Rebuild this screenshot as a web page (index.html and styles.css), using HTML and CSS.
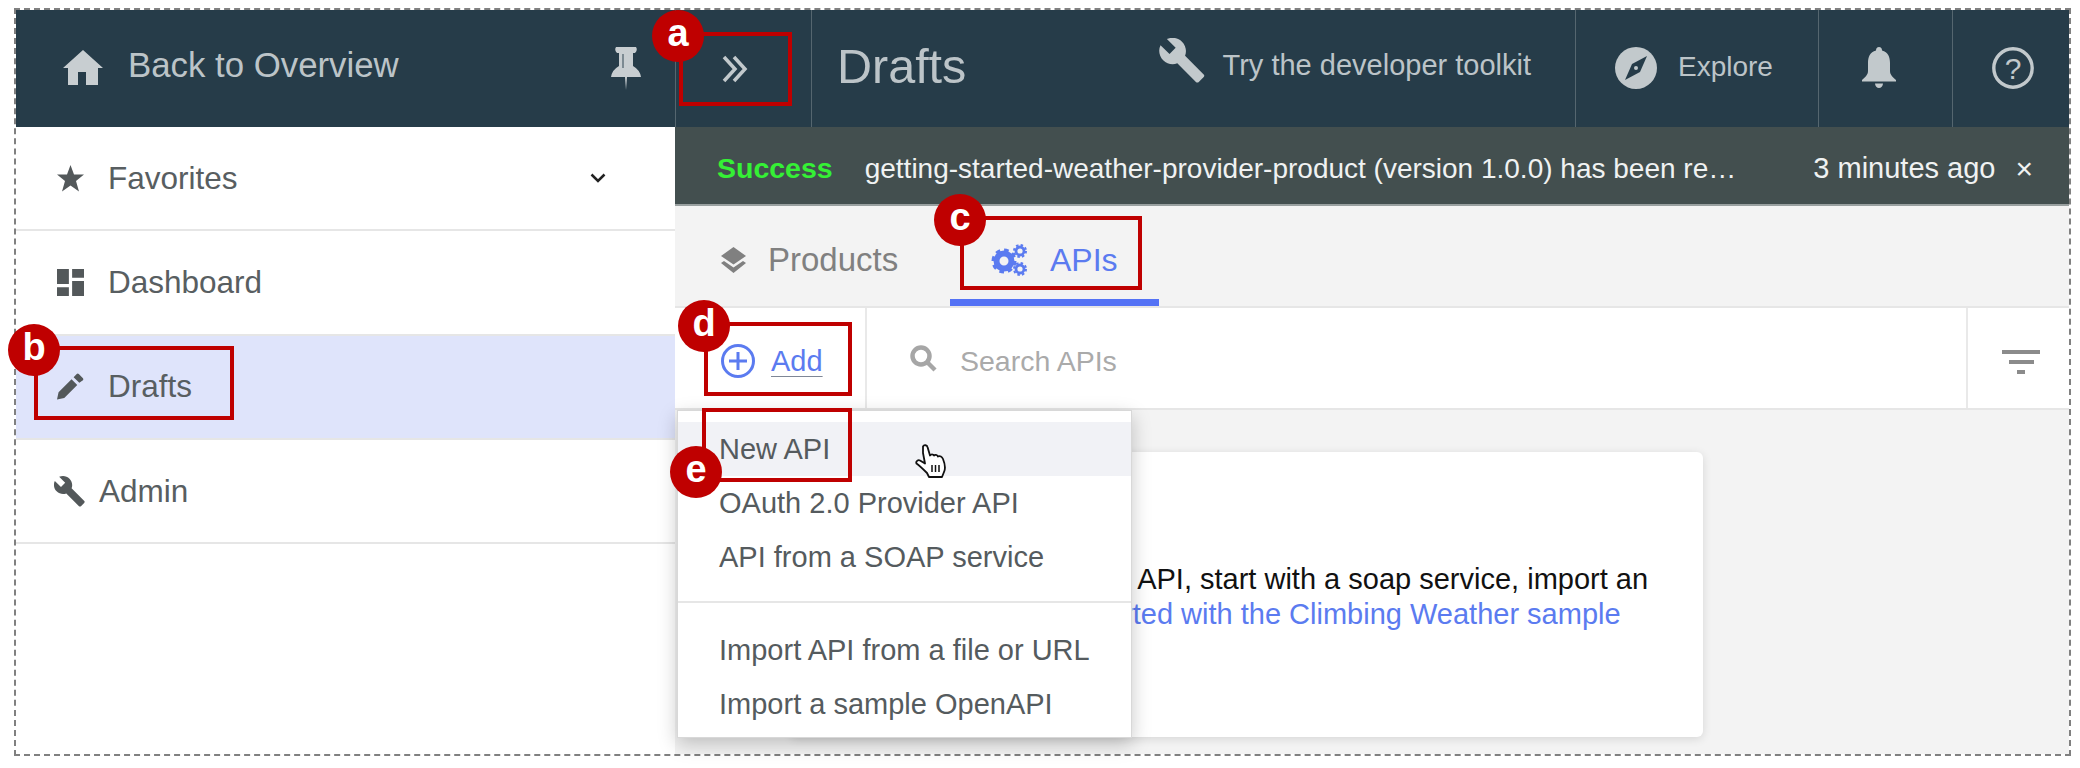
FILE: index.html
```html
<!doctype html>
<html lang="en">
<head>
    <meta charset="UTF-8">
    <title>Drafts</title>
    <link rel="stylesheet" href="styles.css">
</head>
<body>
<div class="frame">
    <aside class="sidebar">
        <div class="side-head">
            <svg class="home-icon" viewBox="0 0 40 35"><path d="M20 0L40 18H35V35H23V22H15V35H5V18H0Z"/></svg>
            <span class="side-head-text">Back to Overview</span>
            <svg class="pin-icon" viewBox="0 0 30 43"><path d="M5 0H25Q27 3 24 6H22V19Q29 23 30 30H16L15 43L14 30H0Q1 23 8 19V6H6Q3 3 5 0Z"/><path class="pin-slot" d="M11 7H13V21H11Z"/></svg>
        </div>
        <ul class="nav">
            <li class="nav-row">
                <svg class="nav-icon" viewBox="0 0 27 27"><path d="M13.5 0L17 9.6H27L19 16L22 26.5L13.5 20.5L5 26.5L8 16L0 9.6H10Z"/></svg>
                <span>Favorites</span>
                <svg class="nav-caret" viewBox="0 0 16 10"><path d="M1.5 1.5L8 8L14.5 1.5"/></svg>
            </li>
            <li class="nav-row">
                <svg class="nav-icon" viewBox="0 0 25 25"><path d="M0 0H11V14H0ZM0 17H11V25H0ZM14 0H25V8H14ZM14 11H25V25H14Z"/></svg>
                <span>Dashboard</span>
            </li>
            <li class="nav-row nav-row-active">
                <svg class="nav-icon" viewBox="0 0 26 25"><path d="M0 25L1.5 18L14 5.5L19.5 11L7 23.5ZM16 3.5L19 .5Q20 -.3 21 .5L25 4.5Q25.8 5.5 25 6.5L21.5 9Z"/></svg>
                <span>Drafts</span>
            </li>
            <li class="nav-row nav-row-admin">
                <svg class="nav-icon" viewBox="1 1.2 22.2 22"><path d="M22.7 19l-9.1-9.1c.9-2.3.4-5-1.5-6.9-2-2-5-2.4-7.4-1.3L9 6 6 9 1.6 4.7C.4 7.1.9 10.1 2.9 12.1c1.9 1.9 4.6 2.4 6.9 1.5l9.1 9.1c.4.4 1 .4 1.4 0l2.3-2.3c.5-.4.5-1.1.1-1.4z"/></svg>
                <span>Admin</span>
            </li>
        </ul>
    </aside>

    <main class="main">
        <div class="topbar">
            <div class="expand-cell">
                <svg class="expand-icon" viewBox="0 0 26 28"><path d="M2 2L13 14L2 26M12 2L23 14L12 26"/></svg>
            </div>
            <div class="page-title">Drafts</div>
            <div class="top-link">
                <svg class="wrench-icon" viewBox="1 1.2 22.2 22"><path d="M22.7 19l-9.1-9.1c.9-2.3.4-5-1.5-6.9-2-2-5-2.4-7.4-1.3L9 6 6 9 1.6 4.7C.4 7.1.9 10.1 2.9 12.1c1.9 1.9 4.6 2.4 6.9 1.5l9.1 9.1c.4.4 1 .4 1.4 0l2.3-2.3c.5-.4.5-1.1.1-1.4z"/></svg>
                <span>Try the developer toolkit</span>
            </div>
            <div class="top-cell explore-cell">
                <svg class="compass-icon" viewBox="0 0 42 42"><circle class="compass-disc" cx="21" cy="21" r="21"/><path class="compass-needle" d="M32 9L25 25L10 33L17 17Z"/><circle class="compass-disc" cx="21" cy="21" r="2"/></svg>
                <span>Explore</span>
            </div>
            <div class="top-cell bell-cell">
                <svg class="bell-icon" viewBox="0 0 34 41"><path d="M17 0C15 0 14 1.5 14 3.5C8 5 6 10 6 16V24C6 28 3 30 0 33V34.500H34V33C31 30 28 28 28 24V16C28 10 26 5 20 3.500C20 1.500 19 0 17 0ZM13 36.500H21C21 39 19 41 17 41S13 39 13 36.500Z"/></svg>
            </div>
            <div class="top-cell help-cell">
                <svg class="help-icon" viewBox="0 0 42 42"><circle cx="21" cy="21" r="19.200"/><text x="21" y="31.500" text-anchor="middle">?</text></svg>
            </div>
        </div>

        <div class="notice">
            <strong class="notice-label">Success</strong>
            <span class="notice-text">getting-started-weather-provider-product (version 1.0.0) has been re…</span>
            <span class="notice-time">3 minutes ago</span>
            <span class="notice-close">×</span>
        </div>

        <div class="tabs">
            <div class="tab">
                <svg class="layers-icon" viewBox="0 0 25 26"><path d="M12.500 0L25 9L12.500 17.500L0 9ZM0 16L3 14L12.500 20.500L22 14L25 16L12.500 26Z"/></svg>
                <span>Products</span>
            </div>
            <div class="tab tab-active">
                <svg class="gears-icon" viewBox="0 0 36 32">
                    <circle class="gear-body" cx="13" cy="17" r="7.500"/>
                    <circle class="gear-teeth" cx="13" cy="17" r="11"/>
                    <circle class="gear-small" cx="29" cy="7" r="4"/>
                    <circle class="gear-small-teeth" cx="29" cy="7" r="6"/>
                    <circle class="gear-small" cx="29" cy="25" r="4"/>
                    <circle class="gear-small-teeth" cx="29" cy="25" r="6"/>
                </svg>
                <span>APIs</span>
            </div>
        </div>

        <div class="toolbar">
            <div class="add-cell">
                <svg class="add-icon" viewBox="0 0 34 34"><circle cx="17" cy="17" r="15.500"/><path d="M17 8V26M8 17H26"/></svg>
                <a class="add-link">Add</a>
            </div>
            <div class="search-cell">
                <svg class="search-icon" viewBox="0 0 27 27"><circle cx="11" cy="11" r="8.500"/><path d="M17 17L25 25"/></svg>
                <span>Search APIs</span>
            </div>
            <div class="filter-cell">
                <div class="filter-icon">
                    <i class="filter-bar filter-bar-long"></i>
                    <i class="filter-bar filter-bar-mid"></i>
                    <i class="filter-bar filter-bar-short"></i>
                </div>
            </div>

            <ul class="add-menu">
                <li class="menu-item menu-item-hover">New API</li>
                <li class="menu-item">OAuth 2.0 Provider API</li>
                <li class="menu-item">API from a SOAP service</li>
                <li class="menu-split"></li>
                <li class="menu-item">Import API from a file or URL</li>
                <li class="menu-item">Import a sample OpenAPI</li>
            </ul>
            <svg class="hand-cursor" viewBox="0 0 32 34">
                <path d="M8 2.500C9 .5 12 1 12.500 3L15 11.500C16 10 18 10 19 11.500C20 10.500 22 10.500 23 12.500C25 11.500 27 12.500 28 15C30 20 31 24 29 28L27 33H14L12 29C9 26 5 22 1.500 19.500C.5 17.500 3 15.500 5 16.500L10 19.500L8 9Z"/>
                <path class="hand-lines" d="M17 21V28M20.500 21V28M24 21V28"/>
            </svg>
        </div>

        <div class="content">
            <div class="card">
                <p class="card-line card-line-first">Design a new API, start with a soap service, import an</p>
                <p class="card-line">or just <a class="card-link">get started with the Climbing Weather sample</a></p>
            </div>
        </div>
    </main>

    <div class="callout-box box-a"></div>
    <div class="callout-box box-b"></div>
    <div class="callout-box box-c"></div>
    <div class="callout-box box-d"></div>
    <div class="callout-box box-e"></div>
    <div class="callout-dot dot-a">a</div>
    <div class="callout-dot dot-b">b</div>
    <div class="callout-dot dot-c">c</div>
    <div class="callout-dot dot-d">d</div>
    <div class="callout-dot dot-e">e</div>
</div>
</body>
</html>
```

FILE: styles.css
```css
*{
    box-sizing: border-box;
}
html, body{
    margin: 0;
    height: 100%;
    overflow: hidden;
    background: #fff;
}
body{
    font-family: "Liberation Sans", Arial, sans-serif;
    color: #555b5e;
}
ul{
    list-style: none;
    margin: 0;
    padding: 0;
}
svg{
    display: block;
    flex: none;
}

.frame{
    position: relative;
    display: flex;
    margin: 8px 9px 0 14px;
    height: 748px;
    border: 2px dashed #808080;
}

/* left column */
.sidebar{
    width: 659px;
    flex: none;
    background: #fff;
}
.side-head{
    display: flex;
    align-items: center;
    height: 117px;
    padding: 0 34px 0 47px;
    gap: 25px;
    background: #263c49;
    color: #bcc4c8;
    font-size: 34.800px;
}
.side-head-text{
    margin-bottom: 7px;
}
.home-icon{
    width: 40px;
    height: 35px;
    margin-bottom: 2px;
    fill: #c8ced1;
}
.pin-icon{
    width: 30px;
    height: 43px;
    margin-left: auto;
    fill: #c8ced1;
}
.pin-slot{
    fill: #7c8a92;
}
.nav-row{
    display: flex;
    align-items: center;
    height: 104.300px;
    padding-left: 41px;
    border-bottom: 2px solid #e6e6e6;
    font-size: 31.500px;
    color: #585e61;
}
.nav-row-active{
    background: #dfe4fb;
}
.nav-icon{
    width: 27px;
    height: 27px;
    margin-right: 24px;
    fill: #53585a;
}
.nav-row-admin{
    padding-left: 38px;
}
.nav-row-admin .nav-icon{
    width: 31px;
    height: 31px;
    margin-right: 14px;
}
.nav-caret{
    width: 16px;
    height: 10px;
    margin-left: auto;
    margin-right: 69px;
    fill: none;
    stroke: #222;
    stroke-width: 2.500;
}

/* right column */
.main{
    flex: 1;
    display: flex;
    flex-direction: column;
    min-width: 0;
    background: #f3f3f3;
}
.topbar{
    display: flex;
    align-items: center;
    height: 117px;
    background: #263c49;
    color: #bcc4c8;
    font-size: 29px;
}
.expand-cell{
    display: flex;
    align-items: center;
    justify-content: center;
    width: 137px;
    height: 100%;
    padding-right: 17px;
    border-left: 1px solid #55666f;
    border-right: 1px solid #55666f;
}
.expand-icon{
    width: 26px;
    height: 28px;
    fill: none;
    stroke: #c2c9cc;
    stroke-width: 3.500;
}
.page-title{
    flex: 1;
    padding-left: 25px;
    padding-bottom: 6px;
    font-size: 48.500px;
    color: #bcc4c8;
}
.top-link{
    display: flex;
    align-items: center;
    gap: 18px;
    padding-right: 44px;
    padding-bottom: 6px;
}
.wrench-icon{
    width: 46px;
    height: 45px;
    margin-bottom: 10px;
    fill: #c2c9cc;
}
.top-cell{
    display: flex;
    align-items: center;
    height: 100%;
    border-left: 1px solid #55666f;
    padding-bottom: 2px;
}
.explore-cell{
    width: 243px;
    padding-left: 39px;
    gap: 21px;
    font-size: 28px;
}
.explore-cell span{
    margin-bottom: 2px;
}
.compass-icon{
    width: 42px;
    height: 42px;
}
.compass-disc{
    fill: #c2c9cc;
}
.compass-needle{
    fill: #263c49;
}
.bell-cell{
    width: 134px;
    padding-left: 43px;
}
.bell-icon{
    width: 34px;
    height: 41px;
    fill: #c2c9cc;
}
.help-cell{
    width: 117px;
    padding-left: 39px;
}
.help-icon{
    width: 42px;
    height: 42px;
    fill: none;
    stroke: #c2c9cc;
    stroke-width: 3.400;
}
.help-icon text{
    fill: #c2c9cc;
    stroke: none;
    font-size: 30px;
    font-family: "Liberation Sans", Arial, sans-serif;
}

.notice{
    display: flex;
    align-items: center;
    height: 79px;
    padding: 6px 36px 0 42px;
    background: #434f4f;
    border-bottom: 2px solid #99a0a0;
    color: #f0f2f2;
    font-size: 28px;
}
.notice-label{
    margin-right: 32px;
    font-size: 28.500px;
    color: #35f035;
}
.notice-text{
    flex: 1;
    white-space: nowrap;
    overflow: hidden;
}
.notice-time{
    margin-right: 20px;
    font-size: 29px;
}
.notice-close{
    font-size: 30px;
}

.tabs{
    display: flex;
    height: 102px;
    padding-left: 5px;
    border-bottom: 2px solid #e6e6e6;
    color: #808080;
    font-size: 33px;
}
.tab{
    display: flex;
    align-items: center;
    height: 100px;
    padding: 15px 41px 0;
    gap: 22px;
    border-bottom: 7px solid transparent;
}
.tab:first-child{
    width: 270px;
}
.tab-active{
    color: #5b7bf0;
    gap: 23px;
    font-size: 32px;
    border-bottom-color: #5472f5;
}
.layers-icon{
    width: 25px;
    height: 26px;
    fill: #808080;
}
.gears-icon{
    width: 36px;
    height: 32px;
}
.gear-body, .gear-small{
    fill: none;
    stroke: #5b7bf0;
}
.gear-body{
    stroke-width: 6;
}
.gear-teeth{
    fill: none;
    stroke: #5b7bf0;
    stroke-width: 3;
    stroke-dasharray: 4.600 4;
}
.gear-small{
    stroke-width: 2.800;
}
.gear-small-teeth{
    fill: none;
    stroke: #5b7bf0;
    stroke-width: 2;
    stroke-dasharray: 2.500 2.200;
}

.toolbar{
    position: relative;
    display: flex;
    height: 102px;
    background: #fff;
    border-bottom: 2px solid #e6e6e6;
}
.add-cell{
    display: flex;
    align-items: center;
    width: 192px;
    padding: 6px 0 0 46px;
    gap: 16px;
    border-right: 2px solid #e9e9e9;
    font-size: 29px;
}
.add-icon{
    width: 34px;
    height: 34px;
    fill: none;
    stroke: #5b7bf0;
    stroke-width: 3;
}
.add-link{
    color: #5b7bf0;
    text-decoration: underline;
    text-decoration-color: #7f8796;
    text-underline-offset: 5px;
    text-decoration-thickness: 1px;
}
.search-cell{
    flex: 1;
    display: flex;
    align-items: center;
    padding: 6px 0 0 43px;
    gap: 23px;
    color: #aaa;
    font-size: 28.500px;
}
.search-icon{
    width: 27px;
    height: 27px;
    margin-bottom: 6px;
    fill: none;
    stroke: #a6a6a6;
    stroke-width: 4.500;
}
.filter-cell{
    display: flex;
    align-items: center;
    justify-content: center;
    width: 103px;
    padding: 8px 0 0 5px;
    border-left: 2px solid #e9e9e9;
}
.filter-icon{
    display: flex;
    flex-direction: column;
    align-items: center;
    gap: 6px;
}
.filter-bar{
    display: block;
    height: 4px;
    background: #8b8b8b;
}
.filter-bar-long{
    width: 38px;
}
.filter-bar-mid{
    width: 25px;
}
.filter-bar-short{
    width: 8px;
}

.add-menu{
    position: absolute;
    left: 2px;
    top: 102px;
    width: 455px;
    height: 328px;
    padding-top: 11px;
    background: #fff;
    border: 1px solid #d8d8d8;
    box-shadow: 0 6px 18px rgba(0,0,0,.22);
    font-size: 29px;
    color: #555b5e;
}
.menu-item{
    display: flex;
    align-items: center;
    height: 54px;
    padding-left: 41px;
}
.menu-item-hover{
    background: #f1f2f6;
}
.menu-split{
    height: 2px;
    margin: 17px 0 20px;
    background: #e6e6e6;
}
.hand-cursor{
    position: absolute;
    left: 240px;
    top: 136px;
    width: 32px;
    height: 34px;
    fill: #fff;
    stroke: #111;
    stroke-width: 1.800;
    stroke-linejoin: round;
}
.hand-lines{
    fill: none;
    stroke-width: 1.500;
}

.content{
    flex: 1;
    padding: 42px 0 0 115px;
}
.card{
    width: 913px;
    height: 285px;
    padding: 110px 0 0 159px;
    background: #fff;
    border-radius: 6px;
    box-shadow: 0 2px 10px rgba(0,0,0,.12);
}
.card-line{
    margin: 0;
    height: 35px;
    line-height: 35px;
    white-space: nowrap;
    font-size: 29px;
    color: #111;
}
.card-line-first{
    padding-left: 6px;
}
.card-link{
    color: #5b7bf0;
}

/* red callouts on top of the screenshot */
.callout-box{
    position: absolute;
    height: 74px;
    border: 4px solid #bf0000;
}
.box-a{
    left: 663px;
    top: 22px;
    width: 113px;
}
.box-b{
    left: 18px;
    top: 336px;
    width: 200px;
}
.box-c{
    left: 944px;
    top: 206px;
    width: 182px;
}
.box-d{
    left: 688px;
    top: 312px;
    width: 148px;
}
.box-e{
    left: 686px;
    top: 398px;
    width: 150px;
}
.callout-dot{
    position: absolute;
    display: flex;
    align-items: center;
    justify-content: center;
    width: 52px;
    height: 52px;
    padding-bottom: 5px;
    border-radius: 50%;
    background: #bf0000;
    color: #fff;
    font-size: 38px;
    font-weight: bold;
}
.dot-a{
    left: 636px;
    top: 0;
}
.dot-b{
    left: -8px;
    top: 314px;
}
.dot-c{
    left: 918px;
    top: 184px;
}
.dot-d{
    left: 662px;
    top: 290px;
}
.dot-e{
    left: 654px;
    top: 436px;
}
```
